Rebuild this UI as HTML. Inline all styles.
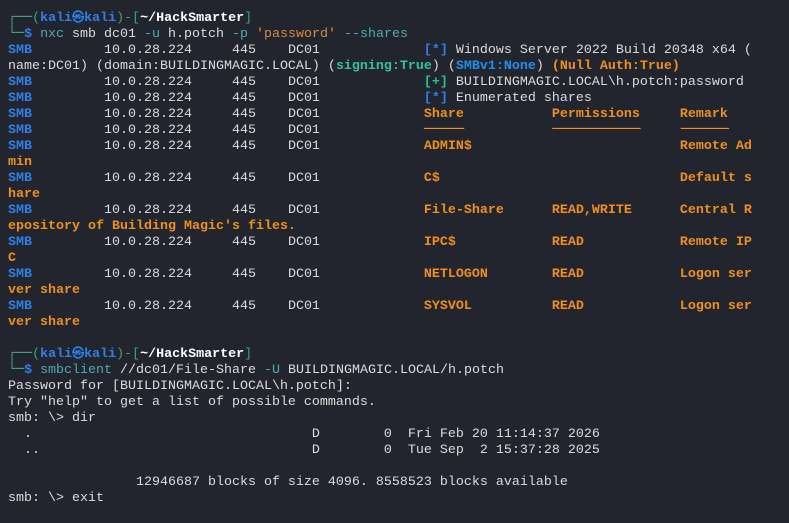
<!DOCTYPE html>
<html><head><meta charset="utf-8"><style>
html,body{margin:0;padding:0;background:#22252e;width:789px;height:523px;overflow:hidden}
pre{margin:0;padding:11px 0 0 8px;font-family:"Liberation Mono","DejaVu Sans Mono",monospace;font-size:13.33px;line-height:16px;color:#dcdcdc;white-space:pre}
.g{color:#3aa57c}.b{color:#2f7fe8;font-weight:bold}.bl{color:#2f7fe8;font-weight:bold}.o{color:#f0901c;font-weight:bold}
.w{color:#ffffff;font-weight:bold}.t{color:#4fa9b5}.p{color:#d98a45}.gb{color:#34c29a;font-weight:bold}
.cb{color:#1e8ff0;font-weight:bold}.gr{color:#2fbf8f;font-weight:bold}
.bx{font-family:"DejaVu Sans Mono",monospace;line-height:10px}
.k{line-height:10px;font-size:12px}
</style></head><body><pre><span class="g bx">┌──</span><span class="g">(</span><span class="b">kali<span class="k">㉿</span>kali</span><span class="g">)-[</span><span class="w">~/HackSmarter</span><span class="g">]</span>
<span class="g bx">└─</span><span class="bl">$</span> <span class="t">nxc</span> smb dc01 <span class="t">-u</span> h.potch <span class="t">-p</span> <span class="p">'password'</span> <span class="t">--shares</span>
<span class="b">SMB</span>         10.0.28.224     445    DC01             <span class="bl">[*]</span> Windows Server 2022 Build 20348 x64 (
name:DC01) (domain:BUILDINGMAGIC.LOCAL) (<span class="gb">signing:True</span>) (<span class="cb">SMBv1:None</span>) <span class="o">(Null Auth:True)</span>
<span class="b">SMB</span>         10.0.28.224     445    DC01             <span class="gr">[+]</span> BUILDINGMAGIC.LOCAL\h.potch:password
<span class="b">SMB</span>         10.0.28.224     445    DC01             <span class="bl">[*]</span> Enumerated shares
<span class="b">SMB</span>         10.0.28.224     445    DC01             <span class="o">Share           Permissions     Remark</span>
<span class="b">SMB</span>         10.0.28.224     445    DC01             <span class="o bx">─────           ───────────     ──────</span>
<span class="b">SMB</span>         10.0.28.224     445    DC01             <span class="o">ADMIN$                          Remote Ad</span>
<span class="o">min</span>
<span class="b">SMB</span>         10.0.28.224     445    DC01             <span class="o">C$                              Default s</span>
<span class="o">hare</span>
<span class="b">SMB</span>         10.0.28.224     445    DC01             <span class="o">File-Share      READ,WRITE      Central R</span>
<span class="o">epository of Building Magic's files.</span>
<span class="b">SMB</span>         10.0.28.224     445    DC01             <span class="o">IPC$            READ            Remote IP</span>
<span class="o">C</span>
<span class="b">SMB</span>         10.0.28.224     445    DC01             <span class="o">NETLOGON        READ            Logon ser</span>
<span class="o">ver share</span>
<span class="b">SMB</span>         10.0.28.224     445    DC01             <span class="o">SYSVOL          READ            Logon ser</span>
<span class="o">ver share</span>

<span class="g bx">┌──</span><span class="g">(</span><span class="b">kali<span class="k">㉿</span>kali</span><span class="g">)-[</span><span class="w">~/HackSmarter</span><span class="g">]</span>
<span class="g bx">└─</span><span class="bl">$</span> <span class="t">smbclient</span> //dc01/File-Share <span class="t">-U</span> BUILDINGMAGIC.LOCAL/h.potch
Password for [BUILDINGMAGIC.LOCAL\h.potch]:
Try "help" to get a list of possible commands.
smb: \&gt; dir
  .                                   D        0  Fri Feb 20 11:14:37 2026
  ..                                  D        0  Tue Sep  2 15:37:28 2025

                12946687 blocks of size 4096. 8558523 blocks available
smb: \&gt; exit</pre></body></html>
